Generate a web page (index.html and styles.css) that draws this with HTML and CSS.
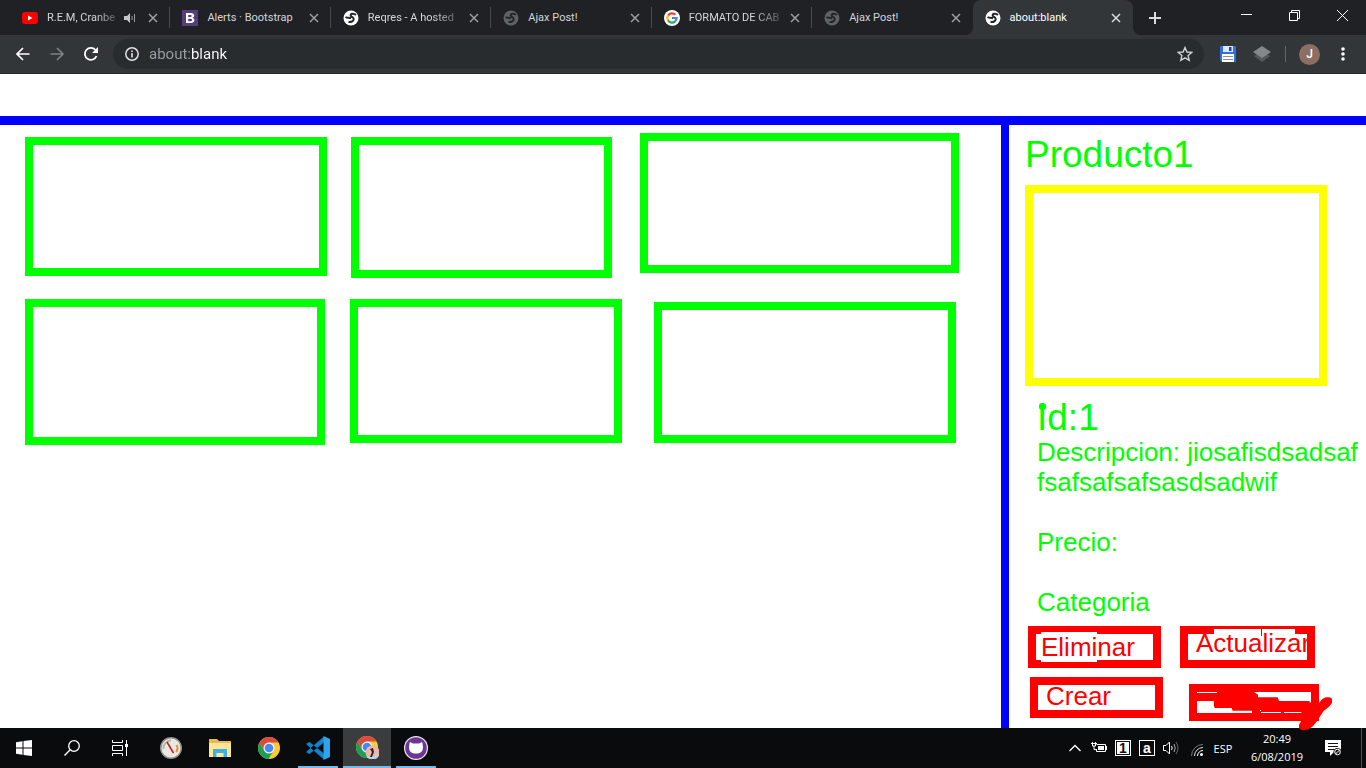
FILE: index.html
```html
<!DOCTYPE html>
<html lang="es">
<head>
<meta charset="utf-8">
<meta name="viewport" content="width=device-width, initial-scale=1">
<title>about:blank</title>
<link rel="stylesheet" href="styles.css">
</head>
<body>
<svg class="defs" aria-hidden="true">
  <symbol id="globe" viewBox="0 0 16 16"><circle cx="8" cy="8" r="7.5" fill="currentColor"/><path class="land" d="M13 5C10.500 2.800 7.500 3.800 7.700 5.500C8 7.200 10.500 6.500 10.700 9C10.700 11.500 8 12.300 5.500 11.800M2.500 7C4.500 8.300 6 7.300 8 8.500"/></symbol>
  <symbol id="x" viewBox="0 0 10 10"><path d="M1 1L9 9M9 1L1 9" stroke="currentColor" stroke-width="1.500"/></symbol>
  <symbol id="chrome" viewBox="0 0 24 24"><circle cx="12" cy="12" r="11" fill="#f9cb35"/><path d="M2.500 6.500A11 11 0 0 1 21.600 6.500H12L7.200 14.700Z" fill="#dd4b3e"/><path d="M2.500 6.500A11 11 0 0 0 11.500 23L16.600 14.600L12 17L7.200 14.700Z" fill="#1b9e58"/><circle cx="12" cy="12" r="5.500" fill="#f4f4f4"/><circle cx="12" cy="12" r="4.300" fill="#4688f1"/></symbol>
</svg>

<header class="browser">
  <div class="tabstrip">
    <div class="tabs">
      <div class="tab">
        <svg class="favicon" viewBox="0 0 16 16"><rect y="2" width="16" height="12" rx="3" fill="#f00"/><path d="M6 5.500V10.500L10.500 8Z" fill="#fff"/></svg>
        <button class="title fade">R.E.M, Cranbe</button>
        <svg class="audio" viewBox="0 0 12 12"><path d="M0 4H3L6 1V11L3 8H0Z" fill="#c4c7ca"/><path d="M8 4V8M10.500 2V10" stroke="#9a9da0"/></svg>
        <button class="close" aria-label="Cerrar"><svg><use href="#x"/></svg></button><span class="sep"></span>
      </div>
      <div class="tab">
        <svg class="favicon" viewBox="0 0 16 16"><rect width="16" height="16" fill="#563d7c"/><path fill-rule="evenodd" d="M4 3H9C13 3 13 7 10.500 7.700C13.500 8.500 13 13 9 13H4ZM6.200 5V7H8.500C10 7 10 5 8.500 5ZM6.200 8.800V11.200H8.800C10.600 11.200 10.600 8.800 8.800 8.800Z" fill="#fff"/></svg>
        <button class="title">Alerts · Bootstrap</button>
        <button class="close" aria-label="Cerrar"><svg><use href="#x"/></svg></button><span class="sep"></span>
      </div>
      <div class="tab">
        <svg class="favicon white"><use href="#globe"/></svg>
        <button class="title fade">Reqres - A hosted</button>
        <button class="close" aria-label="Cerrar"><svg><use href="#x"/></svg></button><span class="sep"></span>
      </div>
      <div class="tab">
        <svg class="favicon dim"><use href="#globe"/></svg>
        <button class="title">Ajax Post!</button>
        <button class="close" aria-label="Cerrar"><svg><use href="#x"/></svg></button><span class="sep"></span>
      </div>
      <div class="tab">
        <svg class="favicon" viewBox="0 0 16 16"><circle cx="8" cy="8" r="8" fill="#fff"/><g fill="none" stroke-width="2.200"><path d="M4.100 5.500A4.600 4.600 0 0 1 11.300 4.700" stroke="#ea4335"/><path d="M4 10.300A4.700 4.700 0 0 1 4 5.600" stroke="#fbbc05"/><path d="M11.200 11.400A4.600 4.600 0 0 1 4 10.300" stroke="#34a853"/><path d="M8 8H12.600C12.600 9.500 12 10.700 11.100 11.400" stroke="#4285f4"/></g></svg>
        <button class="title fade">FORMATO DE CAB</button>
        <button class="close" aria-label="Cerrar"><svg><use href="#x"/></svg></button><span class="sep"></span>
      </div>
      <div class="tab">
        <svg class="favicon dim"><use href="#globe"/></svg>
        <button class="title">Ajax Post!</button>
        <button class="close" aria-label="Cerrar"><svg><use href="#x"/></svg></button><span class="sep none"></span>
      </div>
      <div class="tab active">
        <svg class="favicon white"><use href="#globe"/></svg>
        <button class="title">about:blank</button>
        <button class="close" aria-label="Cerrar"><svg><use href="#x"/></svg></button><span class="sep none"></span>
      </div>
    </div>
    <button class="newtab" aria-label="Nueva pestaña"><svg viewBox="0 0 12 12"><path d="M6 0V12M0 6H12" stroke="#dadce0" stroke-width="2"/></svg></button>
    <div class="window">
      <button aria-label="Minimizar"><svg viewBox="0 0 11 11"><path d="M0 4.500H11" stroke="#fff"/></svg></button>
      <button aria-label="Restaurar"><svg viewBox="0 0 11 11"><path d="M.5 2.500H8.500V10.500H.5ZM2.500 2.500V.5H10.500V8.500H8.500" fill="none" stroke="#fff"/></svg></button>
      <button aria-label="Cerrar ventana"><svg viewBox="0 0 11 11"><path d="M0 0L11 11M11 0L0 11" stroke="#fff"/></svg></button>
    </div>
  </div>
  <div class="toolbar">
    <button aria-label="Atrás"><svg viewBox="0 0 16 16"><path d="M14.500 8H2.500M8 2L2 8L8 14" fill="none" stroke="#fff" stroke-width="1.700"/></svg></button>
    <button aria-label="Adelante"><svg viewBox="0 0 16 16"><path d="M1.500 8H13.500M8 2L14 8L8 14" fill="none" stroke="#7d8083" stroke-width="1.700"/></svg></button>
    <button aria-label="Recargar"><svg viewBox="0 0 16 16"><path d="M13.500 10A6 6 0 1 1 12.500 4" fill="none" stroke="#fff" stroke-width="1.800"/><path d="M15 1V7H9Z" fill="#fff"/></svg></button>
    <div class="omnibox">
      <svg class="info" viewBox="0 0 14 14"><circle cx="7" cy="7" r="6.200" fill="none" stroke="#e0e2e4" stroke-width="1.500"/><path d="M7 6V10.500M7 3.500V5" stroke="#e0e2e4" stroke-width="1.600"/></svg>
      <input class="url" type="text" value="about:blank" aria-label="Dirección">
      <button class="star" aria-label="Favorito"><svg viewBox="0 0 16 16"><path d="M8 1.500L9.900 6L14.700 6.400L11.100 9.600L12.200 14.300L8 11.800L3.800 14.300L4.900 9.600L1.300 6.400L6.100 6Z" fill="none" stroke="#d0d3d6" stroke-width="1.400"/></svg></button>
    </div>
    <button class="ext" aria-label="Guardar"><svg viewBox="0 0 18 18"><path d="M1 1H17V17H3L1 15Z" fill="#2f6fe0"/><path d="M4 1H14V7H4Z" fill="#dbe8ff"/><path d="M10 2H12.500V6H10Z" fill="#1747a6"/><path d="M3 9H15V17H3Z" fill="#fff"/><path d="M4 11.500H14M4 14.500H14" stroke="#8a8f96"/></svg></button>
    <button class="ext" aria-label="Capas"><svg viewBox="0 0 18 18"><path d="M1 11L9 6L17 11L9 17Z" fill="#56595c"/><path d="M0 7L9 1L18 7L9 13Z" fill="#85888b"/></svg></button>
    <span class="bar"></span>
    <button class="avatar" aria-label="Perfil">J</button>
    <button class="more" aria-label="Menú"><svg viewBox="0 0 4 14"><g fill="#fff"><circle cx="2" cy="2" r="1.800"/><circle cx="2" cy="7" r="1.800"/><circle cx="2" cy="12" r="1.800"/></g></svg></button>
  </div>
</header>

<main class="page">
  <div class="banner"></div>
  <div class="content">
    <section class="catalog" aria-label="Productos">
      <div class="shelf first"><div class="card"></div><div class="card"></div><div class="card"></div></div>
      <div class="shelf second"><div class="card"></div><div class="card"></div><div class="card"></div></div>
    </section>
    <aside class="detail">
      <h1 class="name">Producto1</h1>
      <div class="photo"></div>
      <div class="facts">
        <p class="id">Id:1</p>
        <p>Descripcion: jiosafisdsadsaf<br>fsafsafsafsasdsadwif</p>
        <p>Precio:</p>
        <p>Categoria</p>
      </div>
      <div class="actions">
        <button class="box remove"><span>Eliminar</span></button>
        <button class="box update"><span>Actualizar</span></button>
      </div>
      <div class="actions lower">
        <button class="box create"><span>Crear</span></button>
        <button class="box struck" aria-label="Tachado"><svg class="scribble" viewBox="0 0 435 141"><path fill="#f00" d="M20 27H84V24H195L207 32V40H266L270 51H360L366 57H390L400 45L410 40H422L429 44V57L420 68L403 82L394 96L384 112L370 128L356 137L338 138L330 133V122L337 110V84H285V88H276V84H216V90H189V80H131L128 72H78L75 68V51H20Z"/><path fill="#fff" d="M27 24H84V27H27ZM213 78H216V81H213Z"/></svg></button>
      </div>
    </aside>
  </div>
</main>

<footer class="taskbar">
  <nav class="apps">
    <button aria-label="Inicio"><svg class="s16" viewBox="0 0 16 16"><path d="M0 2.300L6.500 1.300V7.500H0ZM7.500 1.100L16 0V7.500H7.500ZM0 8.500H6.500V14.700L0 13.700ZM7.500 8.500H16V16L7.500 14.900Z" fill="#fff"/></svg></button>
    <button aria-label="Buscar"><svg class="s16" viewBox="0 0 16 16"><circle cx="10" cy="6" r="5.300" fill="none" stroke="#fff" stroke-width="1.300"/><path d="M6.200 9.800L.5 15.500" stroke="#fff" stroke-width="1.400"/></svg></button>
    <button aria-label="Vista de tareas"><svg class="s16" viewBox="0 0 16 16"><path d="M.5 0V2.500H10.500V0M.5 16V13.500H10.500V16M.5 5.500H10.500V10.500H.5ZM14.500 0V16" fill="none" stroke="#fff"/><path d="M13 4H16V7H13Z" fill="#fff"/></svg></button>
    <button class="app" aria-label="Monitor"><svg viewBox="0 0 24 24"><circle cx="12" cy="12" r="11" fill="#8e918f"/><circle cx="12" cy="12" r="9.500" fill="#e9e8e3"/><path d="M4.500 13A7.500 7.500 0 0 1 12 4.500" stroke="#b5b6b2" stroke-width="2" fill="none"/><path d="M17.500 9A6 6 0 0 1 17 16" stroke="#ed8b3b" stroke-width="2" fill="none"/><path d="M8 6L14.500 17" stroke="#c51f22" stroke-width="1.600"/></svg></button>
    <button class="app" aria-label="Explorador"><svg viewBox="0 0 24 24"><path d="M1 3H9L11 5H23V21H1Z" fill="#eabb48"/><path d="M1 7H23V21H1Z" fill="#ffe694"/><path d="M5 21V13H19V21H15.500V17H8.500V21Z" fill="#3dafe5"/></svg></button>
    <button class="app" aria-label="Chrome"><svg><use href="#chrome"/></svg></button>
    <button class="app open" aria-label="Visual Studio Code"><svg viewBox="0 0 24 24"><path d="M18 .5V6.500L3.500 18L.5 16.500V15.500ZM18 23.500V17.500L3.500 6L.5 7.500V8.500Z" fill="#0f83cc"/><path d="M17.500 0L24 3V21L17.500 24Z" fill="#2fa4ec"/></svg></button>
    <button class="app current" aria-label="Chrome, ventana activa"><svg viewBox="0 0 24 24"><use href="#chrome"/><circle cx="17.500" cy="17.500" r="7" fill="#efb5a5"/><path d="M11.500 21A7 7 0 0 0 24.500 18L19 20Z" fill="#c5cce0"/><path d="M15 14L18 13L19 17L17 22L15 22L17 17Z" fill="#292323"/></svg></button>
    <button class="app open" aria-label="GitHub Desktop"><svg viewBox="0 0 24 24"><circle cx="12" cy="12" r="12" fill="#eee"/><circle cx="12" cy="12" r="10.800" fill="#6e3694"/><path d="M6 6L9 7.500H15L18 6C19 8 18.500 9 19 11C19 16 16 17.500 12 17.500S5 16 5 11C5.500 9 5 8 6 6Z" fill="#fff"/></svg></button>
  </nav>
  <div class="tray">
    <button aria-label="Iconos ocultos"><svg class="w12" viewBox="0 0 12 12"><path d="M.5 9L6 3.500L11.500 9" fill="none" stroke="#fff" stroke-width="1.300"/></svg></button>
    <button aria-label="Batería"><svg class="s16" viewBox="0 0 16 16"><path d="M5.500 4.500H14.500V11.500H5.500V9M1.500 2V6H4.500V2M3 6V9.500H5.500M0 3.500H6" fill="none" stroke="#fff"/><path d="M7 6H13V10H7ZM15 6H16V10H15Z" fill="#fff"/></svg></button>
    <button aria-label="Bloq Num"><b class="key filled">1</b></button>
    <button aria-label="Bloq Mayús"><b class="key">a</b></button>
    <button aria-label="Volumen"><svg class="s16" viewBox="0 0 16 16"><path d="M.5 5.500H3L6.500 2V14L3 10.500H.5Z" fill="none" stroke="#fff"/><path d="M8.500 6Q10 8 8.500 10" fill="none" stroke="#fff"/><path d="M11 4Q13.500 8 11 12" fill="none" stroke="#aaa"/><path d="M13 2Q17 8 13 14" fill="none" stroke="#666"/></svg></button>
    <button class="wifi" aria-label="Wi-Fi"><svg class="w12" viewBox="0 0 12 12"><g fill="none"><path d="M.5 12A11.500 11.500 0 0 1 12 .5" stroke="#777"/><path d="M3.500 12A8.500 8.500 0 0 1 12 3.500" stroke="#ddd"/><path d="M6.500 12A5.500 5.500 0 0 1 12 6.500" stroke="#fff"/></g><circle cx="10.500" cy="10.500" r="1.500" fill="#fff"/></svg></button>
    <button class="lang">ESP</button>
    <button class="clock"><span>20:49</span><span>6/08/2019</span></button>
    <button class="notes" aria-label="Notificaciones"><svg class="s16" viewBox="0 0 16 16"><path d="M0 0H16V12H9L5 16V12H0Z" fill="#fff"/><path d="M3 3.500H13M3 6.500H13M3 9.500H9" stroke="#111"/><circle cx="12.500" cy="12" r="4" fill="#111"/><circle cx="12.500" cy="12" r="2.800" fill="none" stroke="#fff"/><path d="M10.500 14L14.500 10" stroke="#fff"/></svg></button>
    <span class="edge"></span>
  </div>
</footer>
</body>
</html>
```
FILE: styles.css
```css
* { box-sizing: border-box; }
body {
  margin: 0;
  min-height: 100vh;
  display: flex;
  flex-direction: column;
  background: #fff;
  font-family: "Open Sans", sans-serif;
}
button { padding: 0; border: 0; background: none; color: inherit; font: inherit; }
svg { display: block; flex: none; }
p, h1 { margin: 0; }
.defs { display: none; }

/* Browser frame */
.tabstrip { display: flex; height: 35px; padding-left: 10px; background: #202124; }
.tabs { display: grid; grid-template-columns: repeat(7, 1fr); flex: 0 1 1123px; min-width: 0; }
.tab { display: flex; align-items: center; min-width: 0; padding-left: 12px; color: #d3d6da; font-size: 11px; }
.favicon { width: 16px; height: 16px; margin-right: 9px; }
.white { color: #fff; }
.dim { color: #5f6368; }
.land { fill: none; stroke: #24272a; stroke-width: 2; }
.title { flex: 1; min-width: 0; white-space: nowrap; text-align: left; line-height: 18px; font-family: Roboto, sans-serif; }
.fade { -webkit-mask-image: linear-gradient(90deg, #000 70%, #0004); mask-image: linear-gradient(90deg, #000 70%, #0004); }
.audio { width: 12px; height: 12px; margin: 0 2px 0 8px; }
.close { width: 10px; height: 10px; margin: 0 11px 0 10px; color: #9da0a4; }
.close svg { width: 10px; height: 10px; }
.sep { width: 1px; height: 21px; background: #4a4c50; }
.none { background: none; }
.active { position: relative; background: #323639; border-radius: 8px 8px 0 0; color: #fff; }
.active .close { color: #dadce0; }
.active::before, .active::after { content: ""; position: absolute; bottom: 0; width: 8px; height: 8px; }
.active::before { left: -8px; background: radial-gradient(circle at 0 0, #202124 8px, #323639 8px); }
.active::after { right: -8px; background: radial-gradient(circle at 100% 0, #202124 8px, #323639 8px); }
.newtab { display: grid; place-items: center; width: 44px; }
.newtab svg { width: 12px; height: 12px; }
.window { display: flex; margin-left: auto; height: 30px; }
.window button { display: grid; place-items: center; width: 48px; }
.window svg { width: 11px; height: 11px; }

.toolbar { display: flex; align-items: center; height: 39px; padding-left: 6px; background: #323639; border-bottom: 1px solid #232628; }
.toolbar > button { display: grid; place-items: center; width: 34px; height: 34px; }
.toolbar > button svg { width: 16px; height: 16px; }
.omnibox { display: flex; align-items: center; flex: 1; min-width: 0; height: 30px; margin: 0 7px 0 5px; padding: 0 11px 0 12px; border-radius: 15px; background: #282c2f; }
.info { width: 14px; height: 14px; }
.url {
  flex: 1;
  min-width: 0;
  margin: 0 10px;
  padding: 0;
  border: 0;
  outline: 0;
  background: linear-gradient(90deg, #9aa0a6 42px, #fff 42px);
  -webkit-background-clip: text;
  background-clip: text;
  color: transparent;
  font: 15px/22px Roboto, sans-serif;
}
.star svg { width: 16px; height: 16px; }
.toolbar > .ext svg { width: 18px; height: 18px; }
.bar { width: 1px; height: 16px; margin: 0 13px 0 6px; background: #62666a; }
.toolbar > .avatar { width: 21px; height: 21px; border-radius: 50%; background: #8d6e63; color: #fff; font: 500 12px Roboto, sans-serif; }
.toolbar > .more { width: 46px; }
.toolbar > .more svg { width: 4px; height: 14px; }

/* Page */
.page { display: flex; flex-direction: column; flex: 1; font-family: "Liberation Sans", Arial, sans-serif; }
.banner { height: 51px; border-bottom: 9px solid #00f; }
.content { display: flex; flex: 1; }
.catalog { flex: 1; min-width: 0; padding: 8px 0 0 25px; }
.shelf { display: grid; }
.first { grid-template-columns: 326fr 289fr 319fr; height: 145px; margin-right: 42px; }
.second { grid-template-columns: 325fr 304fr 302fr; height: 146px; margin: 21px 45px 0 0; }
.card { border: 8px solid #0f0; }
.first .card:nth-child(1) { margin: 4px 24px 2px 0; }
.first .card:nth-child(2) { margin: 4px 28px 0 0; }
.first .card:nth-child(3) { margin: 0 0 5px; }
.second .card:nth-child(1) { margin-right: 25px; }
.second .card:nth-child(2) { margin: 0 32px 2px 0; }
.second .card:nth-child(3) { margin: 3px 0 2px; }

.detail { flex: 0 0 365px; padding: 11px 0 7px 16px; border-left: 8px solid #00f; color: #0f0; }
.name, .id { font-size: 37px; line-height: 38px; font-weight: 400; }
.photo { height: 201px; margin: 11px 39px 13px 0; border: 8px solid #ff0; }
.facts { display: flex; flex-direction: column; padding-left: 12px; font-size: 26px; line-height: 30px; }
.facts p + p + p { margin-top: 30px; }
.facts .id { position: relative; line-height: 38px; }
.id::before { content: ""; position: absolute; left: 2px; top: 4px; width: 7px; height: 7px; border-radius: 3px; background: #0f0; }
.actions { display: flex; gap: 19px; margin-top: 9px; padding-left: 3px; }
.lower { gap: 26px; padding-left: 5px; }
.box { width: 133px; height: 42px; border: 8px solid #f00; color: #f00; font-size: 26px; line-height: 30px; text-align: left; white-space: nowrap; }
.box span { display: block; }
.remove span { width: 56px; margin: -2px 0 0 5px; background: #fff; }
.update { width: 135px; }
.update span {
  margin: -8px 0 0 8px;
  background:
    linear-gradient(#f00, #f00) 65px 1px / 1px 7px no-repeat,
    linear-gradient(#fff, #fff) 18px 1px / 81px 7px no-repeat;
}
.create { height: 41px; }
.create span { margin: -4px 0 0 8px; }
.struck { position: relative; width: 130px; height: 37px; margin-top: 7px; }
.scribble { position: absolute; z-index: 1; left: -8px; top: -8px; width: 145px; height: 47px; }

/* Taskbar */
.taskbar { display: flex; justify-content: space-between; height: 40px; background: #090b0d; color: #fff; font-size: 11px; }
.apps, .tray { display: flex; }
.apps button { display: grid; place-items: center; width: 48px; }
.apps .app { margin-left: 1px; }
.apps button:nth-child(4) { margin-left: 3px; }
.apps svg { width: 24px; height: 24px; }
.apps .s16, .s16 { width: 16px; height: 16px; }
.w12 { width: 12px; height: 12px; }
.open { background: linear-gradient(#76b9ed, #76b9ed) center bottom / 40px 2px no-repeat; }
.apps .current { background: #3b3c3e; border-bottom: 2px solid #76b9ed; }
.tray button { display: grid; place-items: center; width: 24px; }
.key { display: grid; place-items: center; width: 16px; height: 16px; border: 1px solid #fff; font: bold 14px/14px "Liberation Sans", sans-serif; }
.filled { background: #fff; box-shadow: inset 0 0 0 1px #111; color: #111; }
.tray .wifi { width: 28px; }
.tray .wifi svg { margin-top: 3px; }
.tray .lang { width: 24px; }
.tray .clock { align-content: center; width: 84px; line-height: 18px; }
.tray .notes { width: 28px; }
.edge { width: 1px; margin: 0 4px 0 14px; background: #555; }
```
